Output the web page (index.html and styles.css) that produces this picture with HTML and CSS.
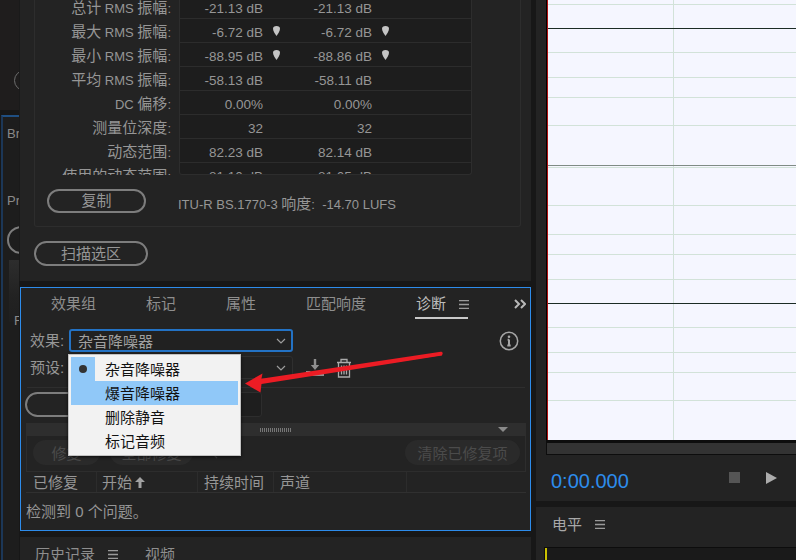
FILE: index.html
```html
<!DOCTYPE html>
<html lang="zh">
<head>
<meta charset="utf-8">
<title>诊断</title>
<link rel="stylesheet" href="styles.css">
</head>
<body>
<div class="page">
  <aside class="strip">
    <div class="strip-top"><span class="strip-arc"></span></div>
    <div class="strip-panel">
      <div class="strip-text strip-br">Br</div>
      <div class="strip-text strip-pr">Pr</div>
      <span class="strip-circle"></span>
      <div class="strip-box"><span class="strip-f">F</span></div>
    </div>
  </aside>

  <main class="middle">
    <section class="stats-panel">
      <div class="group">
        <div class="stats">
          <div class="labels">
            <div class="label">总计<span class="lat"> RMS </span>振幅<span class="lat">:</span></div>
            <div class="label">最大<span class="lat"> RMS </span>振幅<span class="lat">:</span></div>
            <div class="label">最小<span class="lat"> RMS </span>振幅<span class="lat">:</span></div>
            <div class="label">平均<span class="lat"> RMS </span>振幅<span class="lat">:</span></div>
            <div class="label"><span class="lat">DC </span>偏移<span class="lat">:</span></div>
            <div class="label">测量位深度<span class="lat">:</span></div>
            <div class="label">动态范围<span class="lat">:</span></div>
            <div class="label">使用的动态范围<span class="lat">:</span></div>
          </div>
          <div class="table">
            <div class="row"><span class="val">-21.13 dB</span><span class="mark"></span><span class="val">-21.13 dB</span><span class="mark"></span></div>
            <div class="row"><span class="val">-6.72 dB</span><span class="mark"><svg class="pin" viewBox="0 0 7 10"><path d="M0 2.5C0 1 1.3 0 3.5 0S7 1 7 2.5C7 5 5 8 3.5 10 2 8 0 5 0 2.5Z"/></svg></span><span class="val">-6.72 dB</span><span class="mark"><svg class="pin" viewBox="0 0 7 10"><path d="M0 2.5C0 1 1.3 0 3.5 0S7 1 7 2.5C7 5 5 8 3.5 10 2 8 0 5 0 2.5Z"/></svg></span></div>
            <div class="row"><span class="val">-88.95 dB</span><span class="mark"><svg class="pin" viewBox="0 0 7 10"><path d="M0 2.5C0 1 1.3 0 3.5 0S7 1 7 2.5C7 5 5 8 3.5 10 2 8 0 5 0 2.5Z"/></svg></span><span class="val">-88.86 dB</span><span class="mark"><svg class="pin" viewBox="0 0 7 10"><path d="M0 2.5C0 1 1.3 0 3.5 0S7 1 7 2.5C7 5 5 8 3.5 10 2 8 0 5 0 2.5Z"/></svg></span></div>
            <div class="row"><span class="val">-58.13 dB</span><span class="mark"></span><span class="val">-58.11 dB</span><span class="mark"></span></div>
            <div class="row"><span class="val">0.00%</span><span class="mark"></span><span class="val">0.00%</span><span class="mark"></span></div>
            <div class="row"><span class="val">32</span><span class="mark"></span><span class="val">32</span><span class="mark"></span></div>
            <div class="row"><span class="val">82.23 dB</span><span class="mark"></span><span class="val">82.14 dB</span><span class="mark"></span></div>
            <div class="row"><span class="val">81.10 dB</span><span class="mark"></span><span class="val">81.05 dB</span><span class="mark"></span></div>
          </div>
        </div>
        <div class="copy-row">
          <button class="pill copy">复制</button>
          <span class="lufs">ITU-R BS.1770-3 <span class="cjk">响度</span>:&nbsp; -14.70 LUFS</span>
        </div>
      </div>
      <button class="pill scan">扫描选区</button>
    </section>

    <section class="diag">
      <nav class="tabs">
        <span class="tab">效果组</span>
        <span class="tab">标记</span>
        <span class="tab">属性</span>
        <span class="tab">匹配响度</span>
        <span class="tab active">诊断<svg class="menu-icon" viewBox="0 0 10 9"><path d="M0 .7h10M0 4.500h10M0 8.300h10"/></svg></span>
        <svg class="more" viewBox="0 0 12 10"><path d="M1 1l4 4-4 4M7 1l4 4-4 4"/></svg>
      </nav>

      <div class="field first">
        <span class="field-label">效果:</span>
        <div class="select focus"><span>杂音降噪器</span><svg class="chev" viewBox="0 0 10 6"><path d="M1 1l4 4 4-4"/></svg></div>
        <svg class="info" viewBox="0 0 20 20"><circle cx="10" cy="10" r="8.700"/><path class="info-i" d="M10 8.500v6M8.300 14.500h3.400M8.600 8.700H10"/><circle class="info-dot" cx="10" cy="5.800" r="1.300"/></svg>
      </div>
      <div class="field">
        <span class="field-label">预设:</span>
        <div class="select"><svg class="chev" viewBox="0 0 10 6"><path d="M1 1l4 4 4-4"/></svg></div>
        <svg class="dl" viewBox="0 0 18 18"><path class="dl-fill" d="M7.800 0h2.400v6h3L9 11 4.800 6h3ZM0 12h4l2 2h6l2-2h4v5H0Z"/></svg>
        <svg class="trash" viewBox="0 0 16 20"><path d="M1 4.500h14M5 4V1.500h6V4M2.500 4.500V19h11V4.500M5.500 7.500v9M8 7.500v9M10.500 7.500v9"/></svg>
      </div>
      <div class="divider"></div>

      <div class="actions">
        <span class="round"></span>
        <span class="dark-box"></span>
      </div>

      <div class="section-bar"><span class="grip"></span><span class="tri"></span></div>
      <div class="repair-row">
        <button class="ghost g1">修复</button>
        <button class="ghost g2">全部修复</button>
        <svg class="back" viewBox="0 0 8 12"><path d="M6 1L1 6l5 5"/></svg>
        <button class="ghost g3">清除已修复项</button>
      </div>
      <div class="thead">
        <span class="th c1">已修复</span>
        <span class="th c2">开始<svg class="up" viewBox="0 0 10 11"><path d="M5 0l5 5H6.500v6h-3V5H0Z"/></svg></span>
        <span class="th c3">持续时间</span>
        <span class="th c4">声道</span>
        <span class="th c5"></span>
      </div>
      <div class="status">检测到 0 个问题。</div>
    </section>

    <section class="history">
      <span class="tab">历史记录</span>
      <svg class="menu-icon" viewBox="0 0 10 9"><path d="M0 .7h10M0 4.500h10M0 8.300h10"/></svg>
      <span class="tab video">视频</span>
    </section>
  </main>

  <aside class="right">
    <div class="transport-panel">
      <div class="plot">
        <svg class="grid" viewBox="0 0 249 440" preserveAspectRatio="none">
          <path class="g" d="M0 4.500H249M0 52.500H249M0 77.500H249M0 97.500H249M0 125.500H249M0 167.500H249M0 205.500H249M0 234.500H249M0 254.500H249M0 279.500H249M0 327.500H249M0 352.500H249M0 372.500H249M0 400.500H249M126.500 0V440"/>
          <path class="d" d="M0 28.500H249M0 303.500H249"/>
          <path class="m" d="M0 165.500H249"/>
          <path class="r" d="M.5 0V440"/>
        </svg>
      </div>
      <div class="hscroll"></div>
      <div class="transport">
        <span class="time">0:00.000</span>
        <span class="stop"></span>
        <svg class="play" viewBox="0 0 11 12"><path d="M0 0l11 6-11 6Z"/></svg>
      </div>
    </div>
    <div class="level-panel">
      <div class="level-head"><span class="tab level-tab">电平</span><svg class="menu-icon" viewBox="0 0 10 9"><path d="M0 .7h10M0 4.500h10M0 8.300h10"/></svg></div>
      <div class="meter"></div>
    </div>
  </aside>
</div>

<div class="menu">
  <div class="item checked"><span class="check"><i class="dot"></i></span><span class="item-text">杂音降噪器</span></div>
  <div class="item hover"><span class="check"></span><span class="item-text">爆音降噪器</span></div>
  <div class="item"><span class="check"></span><span class="item-text">删除静音</span></div>
  <div class="item"><span class="check"></span><span class="item-text">标记音频</span></div>
</div>

<svg class="arrow" viewBox="0 0 796 560">
  <path class="shaft" d="M441 353.500L258 381"/>
  <path class="head" d="M245 383.500L262.500 373.500 261 381 442 353 442 355.500 261.500 384 260.500 392.500Z"/>
</svg>
</body>
</html>
```
FILE: styles.css
```css
* { box-sizing: border-box; }
html, body { margin: 0; padding: 0; background: #171717; }
body {
  width: 796px; height: 560px; overflow: hidden; position: relative;
  font-family: "Liberation Sans", "Noto Sans CJK SC", sans-serif;
  font-size: 15px; color: #969696;
}
button { font: inherit; margin: 0; padding: 0; background: none; }
svg { display: block; flex: none; }
.lat { font-size: 13px; }
.cjk { font-size: 15px; }

.page { display: flex; width: 796px; height: 560px; }

/* left strip */
.strip { width: 19px; flex: none; display: flex; flex-direction: column; overflow: hidden; }
.strip-top { height: 110px; background: #1f1d1d; padding: 70px 0 0 14px; margin-bottom: 5px; }
.strip-arc { display: block; width: 22px; height: 21px; border: 1.5px solid #6d6d6d; border-radius: 11px; }
.strip-panel { flex: 1; background: #1d1d1d; border-top: 2px solid #1f4f82; border-left: 2px solid #1c3757; margin-left: 1px; padding: 9px 0 0 4px; }
.strip-text { font-size: 13px; line-height: 16px; color: #8a8a8a; white-space: nowrap; }
.strip-pr { margin-top: 51px; }
.strip-circle { display: block; width: 28px; height: 28px; margin: 17px 0 0 0; border: 2px solid #7c7c7c; border-radius: 14px; }
.strip-box { height: 62px; margin: 6px 0 0 2px; background: linear-gradient(#2d2d2d, #222 60%, #1f1f1f); padding: 53px 0 0 5px; }
.strip-f { font-size: 13px; line-height: 16px; color: #8a8a8a; display: block; }

/* middle column */
.middle { width: 512px; flex: none; display: flex; flex-direction: column; }

.stats-panel { height: 281px; flex: none; background: #232323; padding-left: 14px; border-left: 1px solid #1a1a1a; overflow: hidden; }
.group { width: 487px; height: 232px; border: 1px solid #2d2d2d; border-top: 0; border-radius: 0 0 3px 3px; }
.stats { display: flex; height: 180px; margin-top: -5px; overflow: hidden; }
.labels { width: 136px; padding-top: 1px; flex: none; }
.label { height: 24px; line-height: 24px; text-align: right; font-size: 15px; white-space: nowrap; overflow: visible; }
.table { width: 293px; margin-left: 8px; height: 180px; background: #1d1d1d; border: 1px solid #2d2d2d; border-top: 0; border-radius: 0 0 3px 3px; overflow: hidden; }
.row { height: 24px; display: grid; grid-template-columns: 83px 26px 83px 26px; padding-top: 3px; line-height: 22px; border-bottom: 1px solid #2c2c2c; }
.val { text-align: right; font-size: 13.500px; white-space: nowrap; }
.mark { display: flex; justify-content: center; padding-top: 4px; }
.pin { width: 7px; height: 10px; fill: #c4c4c4; }

.copy-row { display: flex; align-items: center; margin-top: 14px; padding-left: 12px; }
.pill { border: 2px solid #7d7d7d; border-radius: 13px; color: #969696; font-size: 15px; text-align: center; }
.copy { width: 99px; height: 24px; line-height: 18px; }
.lufs { margin-left: 32px; font-size: 13px; white-space: nowrap; margin-top: 2px; }
.scan { display: block; width: 114px; height: 25px; margin-top: 14px; line-height: 20px; }

/* diagnostics panel */
.diag { height: 244px; margin: 6px 0 0 1px; flex: none; width: 511px; background: #232323; border: 1px solid #2d8ceb; display: flex; flex-direction: column; }
.tabs { display: flex; gap: 50px; height: 30px; padding-left: 30px; flex: none; position: relative; }
.tab { font-size: 15px; line-height: 20px; padding-top: 6px; color: #8e8e8e; white-space: nowrap; }
.tab.active { display: flex; align-items: flex-start; height: 31px; padding: 6px 0 0 1px; margin-left: -1px; width: 53px; color: #bdbdbd; border-bottom: 2px solid #c9c9c9; }
.menu-icon { width: 10px; height: 9px; stroke: #9a9a9a; stroke-width: 1.300; fill: none; }
.tab.active .menu-icon { margin: 6px 0 0 13px; }
.more { width: 12px; height: 10px; fill: none; stroke: #b8b8b8; stroke-width: 2; position: absolute; right: 4px; top: 11px; }

.field { display: flex; align-items: center; margin-top: 4px; padding-left: 9px; height: 23px; flex: none; }
.field.first { margin-top: 11px; }
.field-label { width: 39px; font-size: 15px; flex: none; white-space: nowrap; padding-bottom: 2px; }
.select { width: 224px; height: 23px; border: 1px solid #2f2f2f; border-radius: 3px; display: flex; align-items: center; justify-content: space-between; padding: 0 6px 2px 8px; font-size: 15px; color: #a0a0a0; flex: none; background: #212121; }
.select svg { margin: 2px 0 0 auto; }
.select.focus { border: 2px solid #2372c4; padding-left: 7px; padding-right: 5px; padding-bottom: 1px; }
.chev { width: 10px; height: 6px; fill: none; stroke: #9c9c9c; stroke-width: 1.200; }
.info { width: 20px; height: 20px; margin-left: auto; margin-right: 11px; fill: none; stroke: #a6a6a6; stroke-width: 1.500; }
.info-i { stroke-width: 2; }
.info-dot { fill: #a6a6a6; stroke: none; }
.dl { width: 18px; height: 18px; margin-left: 13px; }
.dl-fill { fill: #8f8f8f; }
.trash { width: 16px; height: 20px; margin-left: 12px; fill: none; stroke: #aaa; stroke-width: 1.300; }
.divider { height: 1px; flex: none; background: #2e2e2e; margin: 8px 5px 0 6px; }

.actions { display: flex; height: 25px; flex: none; margin-top: 4px; padding-left: 4px; }
.round { width: 100px; height: 25px; border: 2px solid #7d7d7d; border-radius: 13px; }
.dark-box { width: 137px; height: 25px; background: #1e1e1e; border: 1px solid #2d2d2d; border-radius: 3px; }

.section-bar { height: 13px; flex: none; margin: 6px 4px 0 5px; background: #2e2e2e; position: relative; display: flex; align-items: center; }
.grip { width: 31px; height: 4px; margin-left: 234px; background-image: linear-gradient(90deg, #777 1px, transparent 1px); background-size: 2px 2px; }
.tri { margin-left: auto; margin-right: 18px; width: 0; height: 0; border: 5px solid transparent; border-top: 5px solid #8a8a8a; border-bottom: 0; }

.repair-row { height: 36px; flex: none; margin: 0 4px 0 5px; border-right: 1px solid #2d2d2d; border-bottom: 1px solid #2d2d2d; border-left: 1px solid #2d2d2d; display: flex; align-items: center; padding-left: 6px; padding-bottom: 2px; }
.ghost { height: 25px; border: 0; border-radius: 13px; background: #2a2a2a; color: #4b4b4b; font-size: 15px; white-space: nowrap; }
.g1 { width: 67px; }
.g2 { width: 83px; margin-left: 10px; }
.back { width: 8px; height: 12px; margin-left: 18px; fill: none; stroke: #444; stroke-width: 1.200; }
.g3 { width: 115px; margin-left: auto; margin-right: 5px; }

.thead { height: 21px; flex: none; display: flex; margin: 0 4px 0 5px; border-bottom: 1px solid #303030; font-size: 15px; }
.th { line-height: 20px; padding-left: 6px; padding-top: 1px; border-right: 1px solid #2c2c2c; white-space: nowrap; display: flex; align-items: center; }
.c1 { width: 71px; padding-left: 7px; }
.c2 { width: 101px; padding-left: 5px; }
.c3 { width: 76px; }
.c4 { width: 133px; }
.c5 { flex: 1; border-right: 0; }
.up { width: 10px; height: 11px; fill: #a2a2a2; margin-left: 3px; }
.status { font-size: 15px; line-height: 20px; margin-top: 9px; padding-left: 5px; white-space: nowrap; }

.history { flex: 1; margin: 6px 0 0 1px; width: 511px; background: #232323; display: flex; align-items: flex-start; padding-left: 15px; overflow: hidden; }
.history .tab { padding-top: 8px; }
.history .menu-icon { margin: 13px 0 0 13px; }
.video { margin-left: 27px; }

/* right column */
.right { flex: 1; margin-left: 5px; display: flex; flex-direction: column; }
.transport-panel { height: 501px; flex: none; background: #232323; padding-left: 10px; display: flex; flex-direction: column; }
.plot { height: 440px; flex: none; background: #f5f6ff; border-left: 1px solid #000; }
.grid { width: 249px; height: 440px; shape-rendering: crispEdges; }
.grid path { fill: none; stroke-width: 1; }
.g { stroke: #d2e2d9; }
.d { stroke: #1b2b24; }
.m { stroke: #7f8b85; stroke-width: 2; }
.r { stroke: #b01010; }
.hscroll { height: 15px; flex: none; border-top: 3px solid #0d0d0d; border-bottom: 1px solid #0d0d0d; border-left: 1px solid #0d0d0d; background: #333; }
.transport { display: flex; align-items: flex-start; flex: 1; margin-left: -10px; padding: 13px 0 0 15px; }
.time { font-size: 20px; line-height: 24px; color: #2d8ceb; width: 178px; margin-top: 1px; flex: none; }
.stop { width: 11px; height: 11px; background: #555; margin-top: 4px; flex: none; }
.play { width: 11px; height: 12px; fill: #acacac; margin: 4px 0 0 26px; }

.level-panel { flex: 1; margin-top: 6px; background: #232323; overflow: hidden; }
.level-head { display: flex; height: 40px; padding-left: 16px; align-items: flex-start; }
.level-tab { color: #a8a8a8; padding-top: 8px; }
.level-head .menu-icon { margin: 13px 0 0 13px; }
.meter { height: 20px; margin-left: 8px; background: #1a1a1a; border: 1px solid #0d0d0d; border-right: 0; border-bottom: 0; position: relative; }
.meter::before { content: ""; display: block; width: 2px; height: 20px; background: #c9c000; }

/* dropdown menu over the panel */
.menu { position: absolute; left: 68px; top: 354px; width: 173px; height: 102px; background: #f2f2f2; border: 1px solid #c2c2c2; padding: 2px; box-shadow: 0 1px 3px rgba(0,0,0,.7); color: #121212; font-size: 15px; }
.item { height: 24px; display: flex; align-items: center; white-space: nowrap; }
.item-text { padding-bottom: 2px; }
.check { width: 24px; height: 24px; margin-right: 10px; display: flex; align-items: center; justify-content: center; flex: none; }
.checked .check { background: #90c8f8; }
.hover { background: #90c8f8; }
.dot { display: block; width: 8px; height: 8px; border-radius: 50%; background: #333; margin-left: -1px; }

.arrow { position: absolute; left: 0; top: 0; width: 796px; height: 560px; pointer-events: none; }
.shaft { fill: none; stroke: #ec1c24; stroke-width: 3.400; stroke-linecap: round; }
.head { fill: #ec1c24; }
```
